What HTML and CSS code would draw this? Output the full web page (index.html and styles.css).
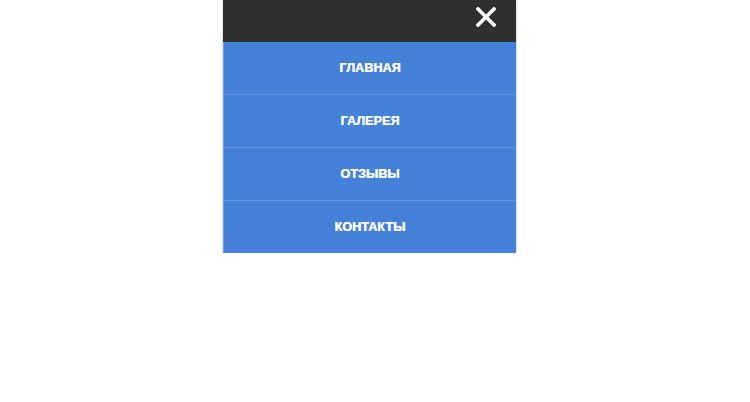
FILE: index.html
```html
<!DOCTYPE html>
<html lang="ru">
<head>
<meta charset="utf-8">
<title>Меню</title>
<link rel="stylesheet" href="styles.css">
</head>
<body>
<nav class="menu">
  <div class="menu-head">
    <button class="close" aria-label="Закрыть">
      <svg width="20" height="20" viewBox="0 0 20 20"><path d="M2 2 L18 18 M18 2 L2 18" stroke="#fff" stroke-width="3.6" stroke-linecap="square"/></svg>
    </button>
  </div>
  <ul class="menu-list">
    <li class="menu-item"><a href="#">ГЛАВНАЯ</a></li>
    <li class="menu-item"><a href="#">ГАЛЕРЕЯ</a></li>
    <li class="menu-item"><a href="#">ОТЗЫВЫ</a></li>
    <li class="menu-item"><a href="#">КОНТАКТЫ</a></li>
  </ul>
</nav>
</body>
</html>
```
FILE: styles.css
```css
html, body {
  margin: 0;
  padding: 0;
  background: #fff;
  font-family: "Liberation Sans", Arial, sans-serif;
}
.menu {
  width: 293px;
  margin-left: 223px;
  box-shadow: 0 1px 2px rgba(0, 0, 0, 0.35);
}
.menu-head {
  height: 42px;
  background: #2f2f2f;
  display: flex;
  justify-content: flex-end;
  align-items: flex-start;
  padding-right: 20px;
}
.close {
  margin-top: 7px;
  width: 20px;
  height: 20px;
  padding: 0;
  border: 0;
  background: none;
  display: block;
}
.close svg { display: block; }
.menu-list {
  list-style: none;
  margin: 0;
  padding: 0;
  background: #4581d8;
  border-left: 1px solid #6b9de3;
}
.menu-item + .menu-item {
  border-top: 1px solid #6296e0;
}
.menu-item a {
  display: flex;
  height: 52px;
  align-items: center;
  justify-content: center;
  color: #fff;
  text-decoration: none;
  font-weight: bold;
  font-size: 12.5px;
  letter-spacing: 0.1px;
  text-shadow: 0.3px 0 0 #fff;
}
```
